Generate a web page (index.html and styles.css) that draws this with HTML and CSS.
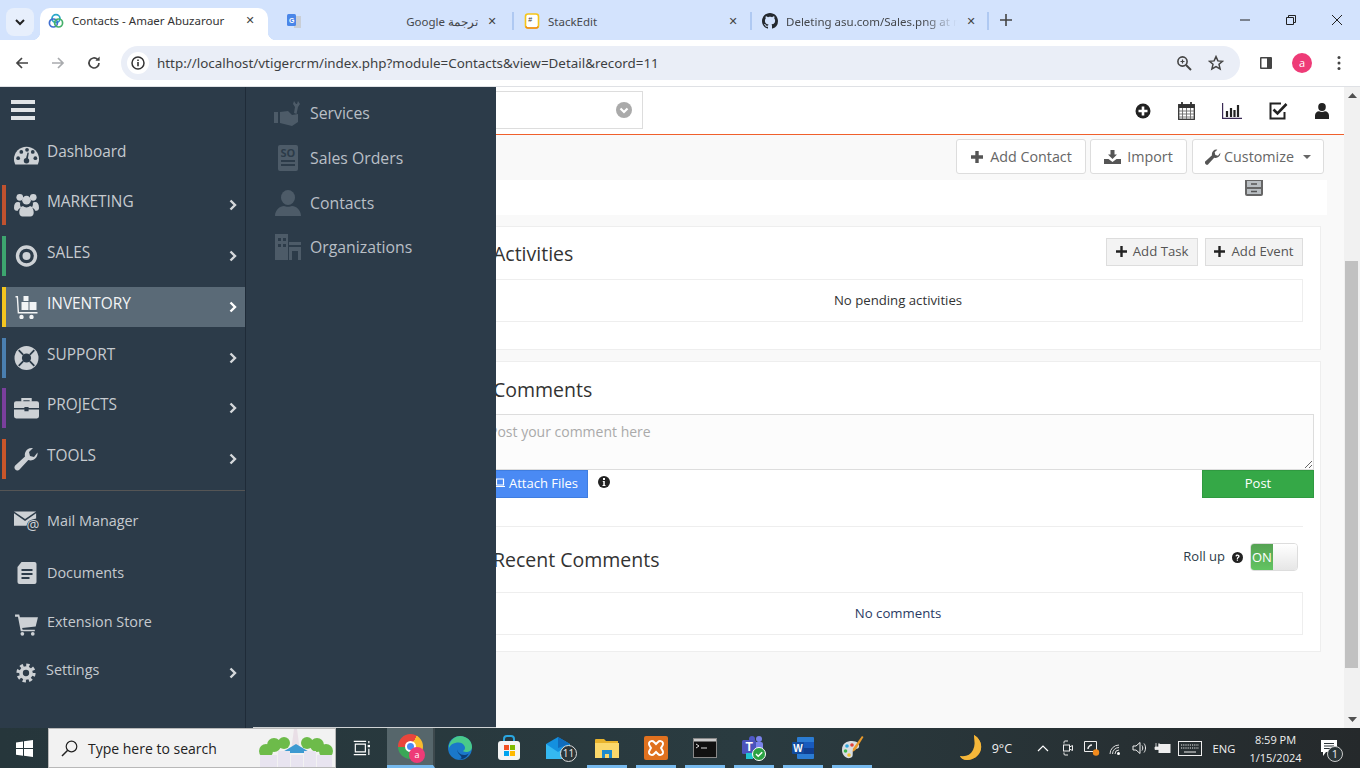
FILE: index.html
```html
<!DOCTYPE html>
<html>
	<head>
		<title>Contacts - Amaer Abuzarour</title>
		<link rel="stylesheet" href="styles.css">
	</head>
	<body>
		<div class="tabstrip">
			<div class="tab-search"><svg width="12" height="12" viewBox="0 0 12 12"><path d="M2 4l4 4 4-4" fill="none" stroke="#222" stroke-width="2"/></svg></div>
			<div class="tab tab-active">
				<svg class="favicon" viewBox="0 0 16 16"><circle cx="8" cy="5.6" r="4" fill="none" stroke="#2aa8c9" stroke-width="1.7"/><circle cx="5.4" cy="10" r="4" fill="none" stroke="#3f6fd0" stroke-width="1.7"/><circle cx="10.6" cy="10" r="4" fill="none" stroke="#46b06a" stroke-width="1.7"/></svg>
				<span class="tab-title">Contacts - Amaer Abuzarour</span>
				<span class="tab-x">✕</span>
			</div>
			<div class="tab tab-translate">
				<svg class="favicon" viewBox="0 0 16 16"><path d="M8 3h7v12H8z" fill="#c9ced6"/><rect x="1" y="1" width="9" height="12" rx="1.5" fill="#4a86e8"/><text x="3" y="9.5" font-size="7" font-family="Liberation Sans" font-weight="bold" fill="#fff">G</text></svg>
				<span class="tab-title tab-rtl" dir="rtl">ترجمة Google</span>
				<span class="tab-x">✕</span>
			</div>
			<div class="tab tab-stackedit">
				<svg class="favicon" viewBox="0 0 16 16"><rect x="1.5" y="1" width="13" height="14" rx="2.5" fill="#fff" stroke="#f5c518" stroke-width="1.6"/><path d="M2 13.5a2 2 0 0 0 2 1.5h8a2 2 0 0 0 2-1.5" fill="none" stroke="#ee8a1c" stroke-width="1.6"/><text x="4.2" y="8.5" font-size="7" font-family="Liberation Sans" fill="#333">#</text></svg>
				<span class="tab-title">StackEdit</span>
				<span class="tab-x">✕</span>
			</div>
			<div class="tab tab-github">
				<svg class="favicon" viewBox="0 0 16 16"><path fill="#24292f" d="M8 0C3.58 0 0 3.58 0 8c0 3.54 2.29 6.53 5.47 7.59.4.07.55-.17.55-.38 0-.19-.01-.82-.01-1.49-2.01.37-2.53-.49-2.69-.94-.09-.23-.48-.94-.82-1.13-.28-.15-.68-.52-.01-.53.63-.01 1.08.58 1.23.82.72 1.21 1.87.87 2.33.66.07-.52.28-.87.51-1.07-1.78-.2-3.64-.89-3.64-3.95 0-.87.31-1.59.82-2.15-.08-.2-.36-1.02.08-2.12 0 0 .67-.21 2.2.82.64-.18 1.32-.27 2-.27s1.36.09 2 .27c1.53-1.04 2.2-.82 2.2-.82.44 1.1.16 1.92.08 2.12.51.56.82 1.27.82 2.15 0 3.07-1.87 3.75-3.65 3.95.29.25.54.73.54 1.48 0 1.07-.01 1.93-.01 2.2 0 .21.15.46.55.38A8.01 8.01 0 0 0 16 8c0-4.42-3.58-8-8-8z"/></svg>
				<span class="tab-title tab-fade">Deleting asu.com/Sales.png at m</span>
				<span class="tab-x">✕</span>
			</div>
			<div class="tab-new">
				<svg width="12" height="12" viewBox="0 0 12 12"><path d="M6 0v12M0 6h12" stroke="#444" stroke-width="1.6"/></svg>
			</div>
			<div class="win-controls">
				<svg width="12" height="12" viewBox="0 0 12 12"><path d="M1 6h10" stroke="#222" stroke-width="1"/></svg>
				<svg width="12" height="12" viewBox="0 0 12 12"><path d="M1.5 3.5h7v7h-7zM3.5 3.5v-2h7v7h-2" fill="none" stroke="#222" stroke-width="1"/></svg>
				<svg width="12" height="12" viewBox="0 0 12 12"><path d="M1 1l10 10M11 1L1 11" stroke="#222" stroke-width="1"/></svg>
			</div>
		</div>

		<div class="toolbar">
			<svg class="nav-btn" viewBox="0 0 16 16"><path d="M14 8H3M8 3L3 8l5 5" fill="none" stroke="#444" stroke-width="1.7"/></svg>
			<svg class="nav-btn" viewBox="0 0 16 16"><path d="M2 8h11M8 3l5 5-5 5" fill="none" stroke="#a9abae" stroke-width="1.7"/></svg>
			<svg class="nav-btn" viewBox="0 0 16 16"><path d="M13 8a5 5 0 1 1-1.5-3.6" fill="none" stroke="#444" stroke-width="1.7"/><path d="M13.6 1.5v4.2H9.4z" fill="#444"/></svg>
			<div class="omnibox">
				<span class="site-info"><svg width="14" height="14" viewBox="0 0 14 14"><circle cx="7" cy="7" r="6" fill="none" stroke="#333" stroke-width="1.5"/><path d="M7 6v4.2M7 3.4v1.5" stroke="#333" stroke-width="1.6"/></svg></span>
				<span class="url">http://localhost/vtigercrm/index.php?module=Contacts&amp;view=Detail&amp;record=11</span>
				<svg class="omni-icon" viewBox="0 0 16 16"><circle cx="6.5" cy="6.5" r="4.6" fill="none" stroke="#444" stroke-width="1.6"/><path d="M10 10l5 5" stroke="#444" stroke-width="2"/><path d="M4.5 6.5h4M6.5 4.5v4" stroke="#444" stroke-width="1.2"/></svg>
				<svg class="omni-icon omni-star" viewBox="0 0 16 16"><path d="M8 1.6l1.9 4.3 4.6.4-3.5 3 1.1 4.6L8 11.5l-4.1 2.4L5 9.3l-3.5-3 4.6-.4z" fill="none" stroke="#444" stroke-width="1.5"/></svg>
			</div>
			<svg class="panel-icon" viewBox="0 0 14 14"><rect x="1" y="1" width="12" height="12" rx="1" fill="#444"/><rect x="2.5" y="2.5" width="5.5" height="9" fill="#fff"/></svg>
			<span class="avatar">a</span>
			<svg class="menu-dots" viewBox="0 0 4 16"><circle cx="2" cy="2.5" r="1.5" fill="#444"/><circle cx="2" cy="8" r="1.5" fill="#444"/><circle cx="2" cy="13.5" r="1.5" fill="#444"/></svg>
		</div>

		<div class="app">
			<nav class="sidebar">
				<div class="hamburger"><i></i><i></i><i></i></div>

				<a class="side-item side-dashboard">
					<svg class="side-icon icon-low" viewBox="0 0 24 20"><path d="M0 14a12 12 0 0 1 24 0c0 2-.5 3.600-1.200 5H1.200C.5 17.600 0 16 0 14z" fill="#cdd1d5"/><g fill="#2c3b49"><circle cx="4" cy="13" r="1.800"/><circle cx="7" cy="7" r="1.800"/><circle cx="12.500" cy="5" r="1.800"/><circle cx="18" cy="7" r="1.800"/><circle cx="20.500" cy="13" r="1.800"/><circle cx="12" cy="15.500" r="2.600"/><path d="M11 15L13 7.500l1.200.3-1.200 7.700z"/></g></svg>
					<span class="side-label">Dashboard</span>
				</a>
				<a class="side-item bar-marketing">
					<svg class="side-icon" viewBox="0 0 26 24"><g fill="#cdd1d5"><circle cx="6" cy="4" r="3.500"/><circle cx="20" cy="4" r="3.500"/><circle cx="13" cy="7" r="4.500"/><path d="M0 15c0-4 1.500-6 4-6 1 0 1.500.5 2.500.5-.5 2-.2 3.500 1 5-1.500.5-3 1.500-3.500 3.500C1.500 18 0 17 0 15zM26 15c0-4-1.500-6-4-6-1 0-1.500.5-2.500.5.5 2 .2 3.500-1 5 1.500.5 3 1.500 3.500 3.500 2.500 0 4-1 4-3z"/><path d="M5.500 20c0-4 2-7 4-7 1 1 2 1.500 3.500 1.500s2.500-.5 3.500-1.500c2 0 4 3 4 7 0 2-1.500 4-3.500 4H9c-2 0-3.500-2-3.500-4z"/></g></svg>
					<span class="side-label">MARKETING</span>
					<svg class="chevron" viewBox="0 0 8 12"><path d="M1.500 1.500L6 6l-4.500 4.500" fill="none" stroke="#d5d8db" stroke-width="2.400"/></svg>
				</a>
				<a class="side-item bar-sales">
					<svg class="side-icon" viewBox="0 0 24 24"><circle cx="12" cy="12" r="9" fill="none" stroke="#cdd1d5" stroke-width="3.400"/><circle cx="12" cy="12" r="4" fill="#cdd1d5"/></svg>
					<span class="side-label">SALES</span>
					<svg class="chevron" viewBox="0 0 8 12"><path d="M1.500 1.500L6 6l-4.500 4.500" fill="none" stroke="#d5d8db" stroke-width="2.400"/></svg>
				</a>
				<a class="side-item side-active bar-inventory">
					<svg class="side-icon" viewBox="0 0 24 24"><g fill="#f2f4f5"><rect x="9" y="1" width="5" height="5"/><rect x="7" y="7" width="7" height="8"/><rect x="15" y="7" width="7" height="8"/><path d="M1 1h2.500l1 16H23v1.500H3.200L2.200 2.500H1z"/><circle cx="7" cy="22" r="2.200"/><circle cx="17" cy="22" r="2.200"/></g></svg>
					<span class="side-label">INVENTORY</span>
					<svg class="chevron" viewBox="0 0 8 12"><path d="M1.500 1.500L6 6l-4.500 4.500" fill="none" stroke="#fff" stroke-width="2.400"/></svg>
				</a>
				<a class="side-item bar-support">
					<svg class="side-icon" viewBox="0 0 24 24"><circle cx="12" cy="12" r="12" fill="#cdd1d5"/><circle cx="12" cy="12" r="4.600" fill="#2c3b49"/><path d="M4.200 4.200l4.600 4.600M19.800 4.200l-4.600 4.600M4.200 19.800l4.600-4.600M19.800 19.800l-4.600-4.600" stroke="#2c3b49" stroke-width="1.800"/></svg>
					<span class="side-label">SUPPORT</span>
					<svg class="chevron" viewBox="0 0 8 12"><path d="M1.500 1.500L6 6l-4.500 4.500" fill="none" stroke="#d5d8db" stroke-width="2.400"/></svg>
				</a>
				<a class="side-item bar-projects">
					<svg class="side-icon" viewBox="0 0 24 20"><path d="M8 4V1.500h8V4" fill="none" stroke="#cdd1d5" stroke-width="2"/><path d="M2 3.500h20a2 2 0 0 1 2 2V10H14v-1h-4v1H0V5.500a2 2 0 0 1 2-2zM0 11.500h10V13h4v-1.500h10V18a2 2 0 0 1-2 2H2a2 2 0 0 1-2-2z" fill="#cdd1d5"/></svg>
					<span class="side-label">PROJECTS</span>
					<svg class="chevron" viewBox="0 0 8 12"><path d="M1.500 1.500L6 6l-4.500 4.500" fill="none" stroke="#d5d8db" stroke-width="2.400"/></svg>
				</a>
				<a class="side-item bar-tools">
					<svg class="side-icon" viewBox="0 0 24 24"><path d="M23 5.500a7 7 0 0 1-9.200 7.500L5.500 22a3 3 0 1 1-4-4.200l9-8.300A7 7 0 0 1 18.500 1L14.500 5l1 4 4 1z" fill="#cdd1d5"/></svg>
					<span class="side-label">TOOLS</span>
					<svg class="chevron" viewBox="0 0 8 12"><path d="M1.500 1.500L6 6l-4.500 4.500" fill="none" stroke="#d5d8db" stroke-width="2.400"/></svg>
				</a>

				<div class="side-divider"></div>

				<a class="side-item side-mail">
					<svg class="side-icon" viewBox="0 0 26 20"><path d="M0 0h23L11.500 8zM0 2v13h13c.5-3.500 3-6 6-6.500L23 7.500V2L11.500 10z" fill="#cdd1d5"/><text x="13" y="19.500" font-size="15" font-family="Open Sans" fill="#cdd1d5">@</text></svg>
					<span class="side-label">Mail Manager</span>
				</a>
				<a class="side-item side-docs">
					<svg class="side-icon" viewBox="0 0 24 24"><path d="M7 1h13a2 2 0 0 1 2 2v18a2 2 0 0 1-2 2H5a2 2 0 0 1-2-2V6z" fill="#cdd1d5"/><path d="M7 9h11M7 13h11M7 17h8" stroke="#2c3b49" stroke-width="2"/></svg>
					<span class="side-label">Documents</span>
				</a>
				<a class="side-item side-store">
					<svg class="side-icon icon-low" viewBox="0 0 24 20"><path d="M1 0h4l.7 2.500H23l-2.200 9-13 1.300.5 1.700H20V16H6.500L3.800 2H1z" fill="#cdd1d5"/><circle cx="8" cy="18.500" r="1.800" fill="#cdd1d5"/><circle cx="18" cy="18.500" r="1.800" fill="#cdd1d5"/></svg>
					<span class="side-label">Extension Store</span>
				</a>
				<a class="side-item side-settings">
					<svg class="side-icon icon-low" viewBox="0 0 24 24"><circle cx="12" cy="12" r="9.500" fill="none" stroke="#cdd1d5" stroke-width="4" stroke-dasharray="3.900 3.560"/><circle cx="12" cy="12" r="6" fill="none" stroke="#cdd1d5" stroke-width="4.400"/></svg>
					<span class="side-label">Settings</span>
					<svg class="chevron icon-low" viewBox="0 0 8 12"><path d="M1.500 1.500L6 6l-4.500 4.500" fill="none" stroke="#d5d8db" stroke-width="2.400"/></svg>
				</a>
			</nav>

			<div class="submenu">
				<a class="sub-item">
					<svg class="sub-icon" viewBox="0 0 28 26"><path d="M0 12h4v11H0zM6 12l8-1 4 4 6-1v8l-6 4-12-3z" fill="#4d5b68"/><path d="M20 13l1-6-2-3 1-3 2 3h1l1-3 2 3-2 3-1.500 7z" fill="#4d5b68"/></svg>
					<span>Services</span>
				</a>
				<a class="sub-item">
					<svg class="sub-icon" viewBox="0 0 28 26"><rect x="4" y="0" width="20" height="26" rx="2" fill="#4d5b68"/><text x="6.500" y="12" font-size="11" font-weight="bold" font-family="Open Sans" fill="#2c3b49">SO</text><path d="M7 16h14M7 20h14" stroke="#2c3b49" stroke-width="2"/></svg>
					<span>Sales Orders</span>
				</a>
				<a class="sub-item">
					<svg class="sub-icon" viewBox="0 0 28 26"><ellipse cx="14" cy="7.500" rx="7" ry="7.500" fill="#4d5b68"/><path d="M1 26c0-6 5-10 9-10 2 1 6 1 8 0 4 0 9 4 9 10z" fill="#4d5b68"/></svg>
					<span>Contacts</span>
				</a>
				<a class="sub-item">
					<svg class="sub-icon" viewBox="0 0 28 26"><path d="M1 0h13v26H1z" fill="#4d5b68"/><path d="M15 8h12v3H15zM15 13h12v13h-3v-9h-6v9h-3z" fill="#4d5b68"/><g fill="#2c3b49"><rect x="4" y="4" width="3" height="3"/><rect x="9" y="4" width="3" height="3"/><rect x="4" y="10" width="3" height="3"/><rect x="9" y="10" width="3" height="3"/></g></svg>
					<span>Organizations</span>
				</a>
			</div>

			<main class="main">
				<header class="topbar">
					<div class="search-box"><svg width="16" height="16" viewBox="0 0 16 16"><circle cx="8" cy="8" r="8" fill="#aaa"/><path d="M4.500 6.500L8 10l3.500-3.500" fill="none" stroke="#fff" stroke-width="2.200"/></svg></div>
					<div class="top-icons">
						<span class="top-icon top-plus"><svg width="16" height="16" viewBox="0 0 16 16"><circle cx="8" cy="8" r="7.500" fill="#222"/><path d="M8 3.500v9M3.500 8h9" stroke="#fff" stroke-width="2.600"/></svg></span>
						<span class="top-icon"><svg width="17" height="18" viewBox="0 0 17 18"><rect x=".7" y="2.700" width="15.600" height="14.600" fill="none" stroke="#333" stroke-width="1.300"/><rect x=".7" y="2.700" width="15.600" height="3.300" fill="#333"/><path d="M4 0v4M13 0v4" stroke="#333" stroke-width="1.800"/><path d="M1 9h15M1 12h15M1 15h15M4.500 6v11M8.500 6v11M12.500 6v11" stroke="#6a6a6a" stroke-width=".9"/></svg></span>
						<span class="top-icon"><svg width="20" height="16" viewBox="0 0 20 16"><path d="M.6 0v15.400H20" fill="none" stroke="#3a2a55" stroke-width="1.200"/><path d="M5 8v6M9 5v9M12.500 7v7M16 2v12" stroke="#222" stroke-width="2.200"/></svg></span>
						<span class="top-icon top-check"><svg width="19" height="18" viewBox="0 0 19 18"><path d="M12 1.500H1.500v15h14V10" fill="none" stroke="#222" stroke-width="2"/><path d="M4.500 7.500L8.500 11.500 17.500 2" fill="none" stroke="#222" stroke-width="2.600"/></svg></span>
						<span class="top-icon"><svg width="14" height="16" viewBox="0 0 14 16"><ellipse cx="7" cy="4" rx="3.800" ry="4" fill="#222"/><path d="M0 16v-3.500C0 10 2 8.200 4 8.200c1.800 1 4.200 1 6 0 2 0 4 1.800 4 4.300V16z" fill="#222"/></svg></span>
					</div>
				</header>

				<div class="subbar">
					<button class="btn btn-contact"><svg width="14" height="14" viewBox="0 0 14 14"><path d="M7 1v12M1 7h12" stroke="#555" stroke-width="3.400"/></svg>Add Contact</button>
					<button class="btn btn-import"><svg width="17" height="14" viewBox="0 0 17 14"><path d="M6.500 0h4v4.500H13L8.500 9 4 4.500h2.500z" fill="#555"/><path d="M0 9h4.500l4 3 4-3H17v5H0z" fill="#555"/></svg>Import</button>
					<button class="btn btn-custom"><svg width="16" height="16" viewBox="0 0 24 24"><path d="M23 5.500a7 7 0 0 1-9.200 7.500L5.500 22a3 3 0 1 1-4-4.200l9-8.300A7 7 0 0 1 18.500 1L14.500 5l1 4 4 1z" fill="#555"/></svg>Customize<i class="caret"></i></button>
				</div>

				<div class="details-strip">
					<svg width="20" height="16" viewBox="0 0 20 16"><path d="M1 0v14a2 2 0 0 0 2 2h14a2 2 0 0 0 2-2V0z" fill="#666"/><rect x="3" y="1" width="14" height="6" fill="#b9bec2"/><rect x="3" y="9" width="14" height="5" fill="#b9bec2"/><path d="M7 4h6M7 11.500h6" stroke="#555" stroke-width="1.500"/></svg>
				</div>

				<section class="widget widget-activities">
					<div class="widget-head">
						<h3 class="widget-title">Activities</h3>
						<div class="widget-actions">
							<button class="btn-small"><svg width="11" height="11" viewBox="0 0 11 11"><path d="M5.500 0v11M0 5.500h11" stroke="#222" stroke-width="2.400"/></svg>Add Task</button>
							<button class="btn-small"><svg width="11" height="11" viewBox="0 0 11 11"><path d="M5.500 0v11M0 5.500h11" stroke="#222" stroke-width="2.400"/></svg>Add Event</button>
						</div>
					</div>
					<div class="empty-box">No pending activities</div>
				</section>

				<section class="widget widget-comments">
					<h3 class="widget-title comments-title">Comments</h3>
					<textarea class="comment-input" placeholder="Post your comment here"></textarea>
					<div class="comment-actions">
						<button class="btn-attach"><svg width="10" height="10" viewBox="0 0 10 10"><path d="M1.500 1h7v6h-7zM0 8.500h10" fill="none" stroke="#fff" stroke-width="1.200"/></svg>Attach Files</button>
						<svg class="info-icon" width="12" height="12" viewBox="0 0 12 12"><circle cx="6" cy="6" r="6" fill="#222"/><path d="M4.800 5h2v4h.7v1h-3V9h.8V6h-.5zM5 2h2v2H5z" fill="#fff"/></svg>
						<button class="btn-post">Post</button>
					</div>
					<div class="recent-head">
						<h3 class="widget-title">Recent Comments</h3>
						<div class="rollup">
							<span class="rollup-text">Roll up</span>
							<svg width="11" height="11" viewBox="0 0 12 12"><circle cx="6" cy="6" r="6" fill="#222"/><path d="M3.800 4.500C4 3.300 5 2.800 6 2.800c1.300 0 2.300.8 2.300 1.900 0 1.700-1.800 1.500-1.800 2.800h-1.300C5.200 5.500 6.800 5.600 6.800 4.700c0-.4-.4-.7-.8-.7-.5 0-.8.300-.9.800zM5.200 8.200h1.300v1.300H5.200z" fill="#fff"/></svg>
							<div class="toggle"><span class="toggle-on">ON</span><span class="toggle-off"></span></div>
						</div>
					</div>
					<div class="empty-box empty-comments">No comments</div>
				</section>
			</main>

			<div class="scrollbar">
				<svg width="9" height="5" viewBox="0 0 9 5"><path d="M4.500 0L9 5H0z" fill="#505050"/></svg>
				<div class="scroll-track"><div class="scroll-thumb"></div></div>
				<svg width="9" height="5" viewBox="0 0 9 5"><path d="M4.500 5L9 0H0z" fill="#505050"/></svg>
			</div>
			<div class="sub-edge"></div>
		</div>

		<footer class="taskbar">
			<div class="start"><svg width="17" height="17" viewBox="0 0 17 17"><path d="M0 2.400L7 1.400v6.700H0zM8 1.300L17 0v8.100H8zM0 9h7v6.700L0 14.700zM8 9h9v8l-9-1.300z" fill="#fff"/></svg></div>
			<div class="task-search">
				<svg width="17" height="17" viewBox="0 0 17 17"><circle cx="10.500" cy="6.500" r="5.300" fill="none" stroke="#222" stroke-width="1.200"/><path d="M6.700 10.300L1 16" stroke="#222" stroke-width="1.500"/></svg>
				<span>Type here to search</span>
				<svg class="search-art" width="78" height="38" viewBox="0 0 78 38"><g fill="#6dbb4a"><circle cx="9" cy="22" r="7"/><circle cx="17" cy="16" r="7"/><circle cx="27" cy="14" r="6"/><circle cx="50" cy="14" r="6"/><circle cx="60" cy="16" r="7"/><circle cx="69" cy="22" r="7"/></g><path d="M37 0h3l3 22h-9z" fill="#e9dfe6"/><path d="M24 24l15-9 15 9z" fill="#3d9ad1"/><g fill="#e8e4f0"><rect x="3" y="26" width="17" height="12"/><rect x="21" y="22" width="12" height="16"/><rect x="34" y="26" width="12" height="12"/><rect x="47" y="22" width="12" height="16"/><rect x="60" y="26" width="15" height="12"/></g></svg>
			</div>
			<div class="task-app task-view"><svg width="17" height="16" viewBox="0 0 22 20"><path d="M3 5h13v10H3zM1 1.500h16M1 18.500h16" fill="none" stroke="#fff" stroke-width="1.500"/><rect x="19" y="6" width="3" height="3" fill="#fff"/><path d="M20.500 1v3M20.500 11v8" stroke="#fff" stroke-width="1.500"/></svg></div>
			<div class="task-app task-chrome">
				<span class="chrome-logo"><i></i></span>
				<span class="chrome-badge">a</span>
			</div>
			<div class="task-app"><svg width="24" height="24" viewBox="0 0 24 24"><circle cx="12" cy="12" r="12" fill="#1a78c9"/><path d="M1 9C3 3 8 0 12 0c7 0 12 5 12 11 0 3-2.500 5-6 5-2 0-3-1-3-1 2-1 2.500-3 1.500-5C15 7 12 6 9 6.500 5 7 2 9 1 12z" fill="#49c98a"/><path d="M9 12c0 4 3 7 7 7 2 0 4-.5 5-2-2 4.500-6 7-10 6 5 0 1-4 1-4-2-1.500-3-4-3-7z" fill="#0c3f78"/></svg></div>
			<div class="task-app"><svg width="24" height="26" viewBox="0 0 24 26"><path d="M7 7V4a3 3 0 0 1 3-3h4a3 3 0 0 1 3 3v3" fill="none" stroke="#2aa6e0" stroke-width="2"/><rect x="1" y="6" width="22" height="19" rx="3" fill="#f4f4f4"/><rect x="7" y="10" width="5" height="5" fill="#f25022"/><rect x="13" y="10" width="5" height="5" fill="#7fba00"/><rect x="7" y="16" width="5" height="5" fill="#00a4ef"/><rect x="13" y="16" width="5" height="5" fill="#ffb900"/></svg></div>
			<div class="task-app"><svg width="24" height="22" viewBox="0 0 24 22"><path d="M0 7L12 0l12 7v15H0z" fill="#1490df"/><path d="M0 7l12 8 12-8v15H0z" fill="#35b8f1"/><path d="M12 0l12 7-12 4z" fill="#0f6cbd"/></svg><span class="mail-count">11</span></div>
			<div class="task-app task-open"><svg width="24" height="20" viewBox="0 0 24 20"><path d="M0 2a1 1 0 0 1 1-1h8l2 2h12v16H0z" fill="#e8b32c"/><rect x="0" y="5" width="24" height="15" fill="#fbd86b"/><path d="M7 12h10v8h-3v-4h-4v4H7z" fill="#1e8bcd"/></svg></div>
			<div class="task-app task-open"><svg width="24" height="24" viewBox="0 0 24 24"><rect width="24" height="24" rx="2" fill="#e0711f"/><path d="M5 7a3 3 0 0 1 5-1l2 2 2-2a3 3 0 0 1 5 1c.5 2-1 3.500-2 5 1 1.500 2.500 3 2 5a3 3 0 0 1-5 1l-2-2-2 2a3 3 0 0 1-5-1c-.5-2 1-3.500 2-5-1-1.500-2.500-3-2-5z" fill="none" stroke="#fff" stroke-width="2"/></svg></div>
			<div class="task-app task-open"><svg width="24" height="20" viewBox="0 0 24 20"><rect x=".5" y=".5" width="23" height="19" fill="#111" stroke="#888"/><rect x="1" y="1" width="22" height="2.500" fill="#ccc"/><path d="M3 6l3 2-3 2M8 10h6" fill="none" stroke="#ddd" stroke-width="1"/></svg></div>
			<div class="task-app task-open"><svg width="26" height="26" viewBox="0 0 26 26"><circle cx="18" cy="4" r="3" fill="#7b83eb"/><circle cx="11" cy="4" r="3" fill="#5059c9"/><rect x="9" y="7" width="13" height="12" rx="2" fill="#7b83eb"/><rect x="1" y="5" width="14" height="14" rx="1.500" fill="#4b53bc"/><text x="4.500" y="16" font-size="12" font-weight="bold" font-family="Liberation Sans" fill="#fff">T</text><rect x="5" y="18" width="7" height="6" fill="#20c4d0"/><circle cx="18" cy="19" r="6.500" fill="#2ca243" stroke="#fff"/><path d="M15 19l2.200 2.200 4-4" fill="none" stroke="#fff" stroke-width="1.500"/></svg></div>
			<div class="task-app task-open"><svg width="24" height="24" viewBox="0 0 24 24"><rect x="6" y="1" width="17" height="22" rx="1" fill="#2b7cd3"/><rect x="6" y="6" width="17" height="6" fill="#185abd"/><rect x="6" y="12" width="17" height="6" fill="#103f91"/><rect x="1" y="6" width="12" height="12" rx="1" fill="#124b9e"/><text x="2.300" y="15.500" font-size="10" font-weight="bold" font-family="Liberation Sans" fill="#fff">W</text></svg></div>
			<div class="task-app task-open"><svg width="24" height="26" viewBox="0 0 24 26"><path d="M2 15C2 8 7 6 12 6c5 0 8 3 7 6-1 3-5 1-6 4-.8 3 1 6-3 7-4 1-8-3-8-8z" fill="#d9dde0"/><circle cx="7" cy="11" r="1.800" fill="#2ea8e0"/><circle cx="5.500" cy="16" r="1.800" fill="#3cb54a"/><circle cx="12" cy="10" r="1.800" fill="#e2403a"/><circle cx="9" cy="20" r="1.800" fill="#f2c230"/><path d="M22 1l1.500 1-8 13-3 2 .5-3.500z" fill="#e89a2c"/></svg></div>

			<div class="tray">
				<svg class="tray-moon" width="24" height="26" viewBox="0 0 24 26"><path d="M14 0c5 3 8 8 7 14-1.500 7-8 11-14 11-3 0-6-1.500-7-4 8 3 14-1 15-8 .5-5-1-9-1-13z" fill="#f2a01e"/><path d="M14 0c1 6 1 11-1 15-2.500 5-7 7-13 6 1 2.500 4 4 7 4 6 0 12.500-4 14-11 1-6-2-11-7-14z" fill="#f5b73a"/></svg>
				<span class="tray-temp">9°C</span>
				<svg class="tray-icon" viewBox="0 0 24 16"><path d="M7 11l5-5 5 5" fill="none" stroke="#fff" stroke-width="1.200"/></svg>
				<svg class="tray-icon" viewBox="0 0 24 16"><path d="M9 3.500V2a1 1 0 0 1 1-1h3M9 12.500V14a1 1 0 0 0 1 1h3" fill="none" stroke="#eee"/><rect x="8.500" y="5" width="6" height="6" fill="none" stroke="#eee"/><path d="M14.500 7l3-1.500v5l-3-1.500" fill="none" stroke="#eee"/></svg>
				<svg class="tray-icon" viewBox="0 0 24 16"><path d="M5.500 1.500h12v10h-12z" fill="none" stroke="#eee"/><path d="M9 9c0-2 2-4 4-4" fill="none" stroke="#eee" stroke-width="1.500"/><circle cx="17" cy="12.500" r="3.200" fill="#f08a1d"/></svg>
				<svg class="tray-icon" viewBox="0 0 24 16"><g fill="none" stroke="#ddd"><path d="M7 14a9 9 0 0 1 9-9M9.500 14a6.500 6.500 0 0 1 6.500-6.500M12 14a4 4 0 0 1 4-4"/></g><circle cx="15.500" cy="13.500" r="1.500" fill="#fff"/></svg>
				<svg class="tray-icon" viewBox="0 0 24 16"><path d="M6 6h3l4-3.500v11L9 10H6z" fill="none" stroke="#eee"/><path d="M15 5.500c1 1.500 1 3.500 0 5M17 3.500c2 2.500 2 6.500 0 9" fill="none" stroke="#eee"/></svg>
				<svg class="tray-icon" viewBox="0 0 24 16"><rect x="8" y="4.500" width="11" height="8" fill="#eee" stroke="#eee"/><path d="M5 3v4M8 3v4M4 7h5v2.500H4z" fill="#eee" stroke="#eee" stroke-width=".8"/></svg>
				<svg class="tray-kbd" viewBox="0 0 24 15"><rect x=".5" y=".5" width="23" height="14" fill="none" stroke="#eee"/><path d="M3 4h18M3 7h18" stroke="#eee" stroke-dasharray="1.200 1"/><path d="M6 11h12" stroke="#eee"/></svg>
				<span class="tray-lang">ENG</span>
				<div class="tray-clock"><span>8:59 PM</span><span>1/15/2024</span></div>
				<div class="tray-notify">
					<svg width="16" height="16" viewBox="0 0 16 16"><path d="M0 0h16v12H5l-3 4v-4H0z" fill="#fff"/><path d="M3 3.500h10M3 6h10M3 8.500h7" stroke="#2a3338"/></svg>
					<span class="notify-count">1</span>
				</div>
			</div>
		</footer>
	</body>
</html>
```
FILE: styles.css
```css
* {
	box-sizing: border-box;
}

html, body {
	margin: 0;
	height: 768px;
	overflow: hidden;
}

body {
	display: flex;
	flex-direction: column;
	font-family: "Open Sans", sans-serif;
	background: #fff;
}

svg {
	display: block;
	flex: none;
}

/* browser tabs */
.tabstrip {
	display: flex;
	height: 40px;
	flex: none;
	padding-top: 8px;
	padding-left: 6px;
	background: #d3e3fd;
}

.tab-search {
	display: flex;
	align-items: center;
	justify-content: center;
	width: 28px;
	height: 28px;
	margin-right: 6px;
	border-radius: 8px;
	background: #e7effc;
}

.tab {
	position: relative;
	display: flex;
	align-items: center;
	height: 32px;
	padding-bottom: 7px;
	font-family: "Noto Sans", sans-serif;
	font-size: 11.5px;
	color: #45484c;
}

.tab-active {
	width: 228px;
	padding-left: 8px;
	background: #fff;
	border-radius: 10px 10px 0 0;
	color: #333;
}

.tab-active::before,
.tab-active::after {
	content: "";
	position: absolute;
	bottom: 0;
	width: 8px;
	height: 8px;
}

.tab-active::before {
	left: -8px;
	background: radial-gradient(circle at 0 0, #d3e3fd 8px, #fff 8.5px);
}

.tab-active::after {
	right: -8px;
	background: radial-gradient(circle at 100% 0, #d3e3fd 8px, #fff 8.5px);
}

.tab-translate {
	width: 246px;
	padding-left: 18px;
	border-right: 2px solid #afc9f2;
}

.tab-stackedit {
	width: 238px;
	padding-left: 10px;
	border-right: 2px solid #afc9f2;
}

.tab-github {
	width: 237px;
	padding-left: 10px;
	border-right: 2px solid #afc9f2;
}

.tab-translate,
.tab-stackedit,
.tab-github {
	height: 18px;
	margin-top: 4px;
	padding-bottom: 0;
}

.favicon {
	width: 16px;
	height: 16px;
	margin-right: 8px;
}

.tab-title {
	flex: 1;
	overflow: hidden;
	white-space: nowrap;
}

.tab-rtl {
	text-align: right;
}

.tab-fade {
	-webkit-mask-image: linear-gradient(to right, #000 80%, transparent 100%);
}

.tab-x {
	width: 14px;
	margin: 0 11px 0 7px;
	text-align: center;
	font-family: "DejaVu Sans", sans-serif;
	font-size: 11px;
	font-weight: bold;
	color: #444;
}

.tab-translate .tab-x {
	margin-right: 13px;
}

.tab-stackedit .tab-x {
	margin-right: 10px;
}

.tab-github .tab-x {
	margin-right: 9px;
}

.tab-new {
	margin: 6px 0 0 11px;
}

.win-controls {
	display: flex;
	gap: 34px;
	margin-left: auto;
	margin-top: 6px;
	padding-right: 17px;
}

/* address bar */
.toolbar {
	display: flex;
	align-items: center;
	height: 47px;
	flex: none;
	border-bottom: 1px solid #dfe1e5;
	background: #fff;
}

.nav-btn {
	width: 16px;
	height: 16px;
	margin-left: 14px;
	margin-right: 6px;
}

.nav-btn + .nav-btn {
	margin-left: 14px;
}

.omnibox {
	display: flex;
	align-items: center;
	width: 1119px;
	height: 34px;
	margin-left: 13px;
	padding-left: 6px;
	border-radius: 17px;
	background: #eaeef7;
}

.site-info {
	display: flex;
	align-items: center;
	justify-content: center;
	width: 22px;
	height: 22px;
	border-radius: 50%;
	background: #fff;
}

.url {
	flex: 1;
	margin-left: 8px;
	font-family: "Noto Sans", sans-serif;
	font-size: 13.4px;
	color: #3d3f42;
}

.omni-icon {
	width: 16px;
	height: 16px;
}

.omni-star {
	margin-left: 16px;
	margin-right: 16px;
}

.panel-icon {
	width: 14px;
	height: 14px;
	margin-left: 19px;
}

.avatar {
	width: 20px;
	height: 20px;
	margin-left: 19px;
	border-radius: 50%;
	background: #ee3b77;
	color: #fff;
	font-size: 11px;
	line-height: 19px;
	text-align: center;
}

.menu-dots {
	width: 4px;
	height: 16px;
	margin-left: 25px;
}

/* app area */
.app {
	position: relative;
	display: flex;
	height: 641px;
	flex: none;
}

.sidebar {
	width: 245px;
	flex: none;
	background: #2c3b49;
}

.hamburger {
	height: 45px;
	padding: 13px 0 0 11px;
}

.hamburger i {
	display: block;
	width: 24px;
	height: 4px;
	margin-bottom: 4px;
	background: #e0e3e6;
}

.side-item {
	display: flex;
	align-items: center;
	height: 40px;
	margin-left: 2px;
	margin-bottom: 11px;
	border-left: 4px solid transparent;
	color: #c6cacf;
}

.side-dashboard {
	margin-bottom: 13px;
}

.side-dashboard .side-label {
	margin-bottom: 2px;
}

.side-icon {
	width: 25px;
	height: 24px;
	margin-left: 8px;
	margin-right: 8px;
}

.icon-low {
	margin-top: 6px;
}

.side-label {
	flex: 1;
	margin-bottom: 7px;
	font-size: 15.4px;
}

.chevron {
	width: 8px;
	height: 12px;
	margin-right: 8px;
}

.side-active {
	background: #5a6a77;
	color: #f2f4f5;
}

.bar-marketing { border-left-color: #c0522f; }
.bar-sales { border-left-color: #3da56f; }
.bar-inventory { border-left-color: #f4c51f; }
.bar-support { border-left-color: #4a7fb0; margin-bottom: 10px; }
.bar-projects { border-left-color: #7a3f9d; }
.bar-tools { border-left-color: #c9562a; }

.side-divider {
	height: 1px;
	margin-bottom: 10px;
	background: #555;
}

.side-mail .side-label,
.side-docs .side-label,
.side-store .side-label,
.side-settings .side-label {
	margin-bottom: 2px;
	font-size: 14.4px;
}

.side-mail {
	margin-bottom: 12px;
}

.side-docs {
	margin-bottom: 9px;
}

.side-store {
	margin-bottom: 8px;
}

.side-settings .side-icon {
	width: 20px;
	height: 20px;
	margin-left: 10px;
	margin-right: 10px;
}

/* inventory fly out */
.submenu {
	width: 251px;
	flex: none;
	padding-top: 4px;
	border-left: 1px solid #1f2b38;
	background: #2c3b49;
}

.sub-item {
	display: flex;
	align-items: center;
	height: 44.7px;
	padding-left: 28px;
	font-size: 15.8px;
	color: #b9bfc6;
}

.sub-icon {
	width: 28px;
	height: 26px;
	margin-right: 8px;
}

.sub-edge {
	position: absolute;
	left: 253px;
	bottom: 0;
	width: 243px;
	height: 1px;
	background: #cfd2d4;
}

/* page behind the menu */
.main {
	width: 848px;
	flex: none;
	overflow: hidden;
	background: #f9f9f9;
}

.topbar {
	display: flex;
	align-items: center;
	justify-content: space-between;
	height: 48px;
	border-bottom: 1px solid #f0602c;
	background: #fff;
}

.search-box {
	display: flex;
	align-items: center;
	justify-content: flex-end;
	width: 167px;
	height: 38px;
	margin-left: -20px;
	margin-bottom: 1px;
	padding-right: 10px;
	border: 1px solid #ddd;
	background: #fff;
}

.top-icons {
	display: flex;
}

.top-icon {
	display: flex;
	align-items: center;
	justify-content: center;
	width: 45px;
}

.top-plus {
	padding-left: 2px;
}

.top-check {
	padding-left: 3px;
}

.subbar {
	display: flex;
	justify-content: flex-end;
	gap: 4px;
	height: 45px;
	padding-top: 4px;
	padding-right: 20px;
}

.btn {
	display: flex;
	align-items: center;
	justify-content: center;
	gap: 6px;
	height: 35px;
	border: 1px solid #ddd;
	border-radius: 3px;
	background: #fff;
	font-family: inherit;
	font-size: 14.3px;
	color: #666;
}

.btn-contact { width: 130px; }
.btn-import { width: 97px; }
.btn-custom { width: 132px; gap: 3px; margin-left: 1px; }

.caret {
	width: 0;
	height: 0;
	margin-left: 6px;
	border-left: 4px solid transparent;
	border-right: 4px solid transparent;
	border-top: 4px solid #666;
}

.details-strip {
	display: flex;
	justify-content: flex-end;
	width: 831px;
	height: 35px;
	padding-right: 63px;
	background: #fff;
}

.widget {
	width: 845px;
	margin-left: -20px;
	padding: 0 17px 0 16px;
	border: 1px solid #eee;
	background: #fff;
}

.widget-activities {
	height: 124px;
	margin-top: 11px;
}

.widget-head {
	display: flex;
	align-items: center;
	justify-content: space-between;
	height: 52px;
}

.widget-title {
	margin: 0;
	font-size: 19.5px;
	font-weight: 400;
	color: #333;
}

.widget-actions {
	display: flex;
	gap: 7px;
	margin-top: -2px;
}

.btn-small {
	display: flex;
	align-items: center;
	justify-content: center;
	gap: 6px;
	height: 28px;
	border: 1px solid #ddd;
	background: #f3f3f3;
	font-family: inherit;
	font-size: 13.2px;
	color: #555;
	padding: 0 8.5px 2px;
}

.empty-box {
	display: flex;
	align-items: center;
	justify-content: center;
	height: 43px;
	padding-bottom: 2px;
	border: 1px solid #eee;
	font-size: 13.2px;
	color: #333;
}

.widget-comments {
	height: 291px;
	margin-top: 11px;
	padding-left: 0;
}

.comments-title {
	padding: 14px 0 0 16px;
	height: 52px;
}

.comment-input {
	display: block;
	width: 836px;
	height: 56px;
	padding: 7px 10px;
	border: 1px solid #ddd;
	border-radius: 0;
	background: #fcfcfc;
	font-family: inherit;
	font-size: 14px;
	margin-left: 1px;
}

.comment-input::placeholder {
	color: #aaa;
}

.comment-actions {
	display: flex;
	align-items: flex-start;
	width: 837px;
	height: 28px;
}

.btn-attach {
	display: flex;
	align-items: center;
	justify-content: flex-end;
	gap: 4px;
	width: 111px;
	height: 28px;
	padding: 0 9px 2px 0;
	border: 1px solid #3f7de0;
	background: #4a8af4;
	color: #fff;
	font-family: inherit;
	font-size: 13px;
}

.info-icon {
	margin: 6px 0 0 10px;
}

.btn-post {
	width: 112px;
	height: 28px;
	margin-left: auto;
	padding-bottom: 4px;
	border: 1px solid #2f9a40;
	background: #35a847;
	color: #fff;
	font-family: inherit;
	font-size: 13px;
}

.recent-head {
	display: flex;
	align-items: center;
	justify-content: space-between;
	height: 66px;
	margin: 28px 0 0 16px;
	border-top: 1px solid #eee;
}

.rollup {
	display: flex;
	align-items: center;
	gap: 7px;
	margin-top: -5px;
	margin-right: 5px;
	font-size: 13px;
	color: #2c3b49;
}

.rollup-text {
	margin-bottom: 2px;
}

.toggle {
	display: flex;
	width: 48px;
	height: 28px;
	border: 1px solid #ddd;
	border-radius: 4px;
	overflow: hidden;
}

.toggle-on {
	width: 22px;
	padding-left: 1px;
	background: linear-gradient(#55a253, #62c462);
	color: #fff;
	font-size: 13px;
	line-height: 26px;
}

.toggle-off {
	flex: 1;
	background: linear-gradient(#fff, #e6e6e6);
}

.empty-comments {
	margin-left: 16px;
	color: #2a3a63;
}

.scrollbar {
	display: flex;
	flex-direction: column;
	align-items: center;
	width: 16px;
	flex: none;
	padding: 6px 0 6px;
	background: #f1f1f1;
}

.scroll-track {
	flex: 1;
	width: 100%;
	padding-top: 163px;
}

.scroll-thumb {
	width: 13px;
	height: 407px;
	margin-left: 1px;
	background: #c1c1c1;
}

/* windows taskbar */
.taskbar {
	display: flex;
	align-items: stretch;
	height: 40px;
	flex: none;
	background: linear-gradient(90deg, #26363b, #2a3b40 55%, #25292b);
	color: #f0f0f0;
}

.start {
	display: flex;
	align-items: center;
	justify-content: center;
	width: 48px;
}

.task-search {
	display: flex;
	align-items: center;
	width: 288px;
	padding-left: 12px;
	border: 1px solid #b8b8b8;
	background: #f2f2f2;
	font-size: 14px;
	color: #222;
	overflow: hidden;
}

.task-search span {
	margin-left: 10px;
}

.search-art {
	margin-left: auto;
}

.task-app {
	position: relative;
	display: flex;
	align-items: center;
	justify-content: center;
	width: 49px;
}

.task-view {
	width: 51px;
	padding-right: 1px;
}

.task-chrome {
	width: 48px;
	border-right: 2px solid #3d494d;
	border-bottom: 3px solid #76b9ed;
	background: #56666b;
}

.chrome-logo {
	display: flex;
	align-items: center;
	justify-content: center;
	width: 25px;
	height: 25px;
	border-radius: 50%;
	background: conic-gradient(#e8453c 0 30deg, #f9bb2d 30deg 140deg, #3aa757 140deg 270deg, #e8453c 270deg);
}

.chrome-logo i {
	width: 11px;
	height: 11px;
	border: 2px solid #fff;
	border-radius: 50%;
	background: #4a8af4;
}

.chrome-badge {
	position: absolute;
	left: 22px;
	top: 19px;
	width: 16px;
	height: 16px;
	border-radius: 50%;
	background: #ee3b77;
	color: #fff;
	font-size: 9px;
	line-height: 15px;
	text-align: center;
}

.task-open::after {
	content: "";
	position: absolute;
	left: 5px;
	right: 4px;
	bottom: 0;
	height: 3px;
	background: #76b9ed;
}

.mail-count {
	position: absolute;
	left: 27px;
	top: 17px;
	width: 17px;
	height: 17px;
	border: 1px solid #ddd;
	border-radius: 50%;
	background: #2b3538;
	font-size: 10px;
	line-height: 15px;
	text-align: center;
}

.tray {
	display: flex;
	align-items: center;
	margin-left: auto;
	font-size: 11.2px;
}

.tray-temp {
	margin-left: 8px;
	margin-right: 19px;
	font-size: 12.5px;
}

.tray-icon {
	width: 24px;
	height: 16px;
}

.tray-kbd {
	width: 24px;
	height: 15px;
	margin: 0 3px;
}

.tray-lang {
	width: 28px;
	margin-left: 5px;
	text-align: center;
}

.tray-clock {
	display: flex;
	flex-direction: column;
	align-items: center;
	gap: 3px;
	width: 65px;
	margin-left: 5px;
	font-size: 11px;
	line-height: 15px;
}

.tray-notify {
	position: relative;
	width: 52px;
	padding-left: 13px;
}

.notify-count {
	position: absolute;
	left: 19px;
	top: 6px;
	width: 16px;
	height: 16px;
	border: 1px solid #ccc;
	border-radius: 50%;
	background: #2b3538;
	font-size: 11px;
	line-height: 14px;
	text-align: center;
}
```
